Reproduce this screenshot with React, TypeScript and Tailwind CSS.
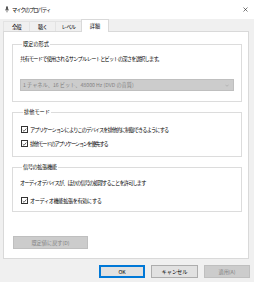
const font = { fontFamily: '"Noto Sans CJK JP", "Noto Sans", sans-serif' };

function Check() {
  return (
    <span className="w-[7px] h-[7px] border border-[#333] bg-white flex items-center justify-center shrink-0">
      <svg viewBox="0 0 10 10" className="w-[6px] h-[6px]">
        <path d="M1.5 5.2 L4 7.6 L8.6 2.2" fill="none" stroke="#222" strokeWidth="1.4" />
      </svg>
    </span>
  );
}

const tabs = ["全般", "聴く", "レベル", "詳細"];

export default function App() {
  return (
    <div
      className="w-[254px] h-[282px] bg-[#f0f0f0] text-black text-[5.2px] leading-[6px] flex flex-col overflow-hidden"
      style={font}
    >
      {/* ===== TITLE BAR ===== */}
      <div className="h-[19px] bg-white flex items-center pl-[5px] pr-[6px] shrink-0">
        <svg viewBox="0 0 6 10" className="w-[4px] h-[7px] mr-[3px]">
          <rect x="1.5" y="0" width="3" height="6" rx="1.5" fill="#555" />
          <path d="M0.6 4 Q0.6 7.5 3 7.5 Q5.4 7.5 5.4 4" fill="none" stroke="#555" strokeWidth="0.8" />
          <rect x="2.6" y="7.5" width="0.8" height="2" fill="#555" />
        </svg>
        <span className="tracking-[-0.9px]">マイクのプロパティ</span>
        <svg viewBox="0 0 10 10" className="w-[5px] h-[5px] ml-auto">
          <path d="M1 1 L9 9 M9 1 L1 9" stroke="#222" strokeWidth="1.2" />
        </svg>
      </div>

      {/* ===== TABS ===== */}
      <div className="h-[12px] flex items-end pl-[3px] shrink-0">
        {tabs.map((t, i) =>
          i === 3 ? (
            <div
              key={t}
              className="h-[13px] w-[28px] -mb-px bg-white border border-b-0 border-[#d9d9d9] flex items-center justify-center relative z-10"
            >
              {t}
            </div>
          ) : (
            <div
              key={t}
              className="h-[10px] w-[26px] border border-r-0 border-b-0 border-[#e3e3e3] flex items-center justify-center tracking-[-0.6px]"
            >
              {t}
            </div>
          )
        )}
      </div>

      {/* ===== PANEL ===== */}
      <div className="ml-[3px] mr-[5px] h-[228px] bg-white border border-[#d9d9d9] pl-[8px] pr-[6px] pt-[9px] flex flex-col shrink-0">
        <fieldset className="border border-[#dcdcdc] px-[7px] pt-[9px] pb-[10px]">
          <legend className="ml-[2px] px-[1px] leading-[6px]">既定の形式</legend>
          <div className="tracking-[-0.75px]">共有モードで使用されるサンプル レートとビットの深さを選択します。</div>
          <div className="mt-[17px] h-[12px] bg-[#cccccc] border border-[#bfbfbf] flex items-center pl-[2px] pr-[4px] text-[#838383]">
            <span>1 チャネル、16 ビット、48000 Hz (DVD の音質)</span>
            <svg viewBox="0 0 10 6" className="w-[4px] h-[3px] ml-auto">
              <path d="M1 1 L5 5 L9 1" fill="none" stroke="#9a9a9a" strokeWidth="1.2" />
            </svg>
          </div>
        </fieldset>

        <fieldset className="mt-[7px] border border-[#dcdcdc] px-[8px] pt-[11px] pb-[9px]">
          <legend className="ml-[2px] px-[1px] leading-[6px]">排他モード</legend>
          <div className="flex items-center gap-[2px] h-[7px]">
            <Check />
            <span className="tracking-[-0.85px]">アプリケーションによりこのデバイスを排他的に制御できるようにする</span>
          </div>
          <div className="flex items-center gap-[2px] h-[7px] mt-[7px]">
            <Check />
            <span className="tracking-[-1.1px]">排他モードのアプリケーションを優先する</span>
          </div>
        </fieldset>

        <fieldset className="mt-[7px] border border-[#dcdcdc] px-[7px] pt-[10px] pb-[7px]">
          <legend className="ml-[2px] px-[1px] leading-[6px] tracking-[-0.4px]">信号の拡張機能</legend>
          <div className="tracking-[-0.85px]">オーディオ デバイスが、ほかの信号の処理することを許可します</div>
          <div className="flex items-center gap-[2px] h-[7px] mt-[11px] ml-[1px]">
            <Check />
            <span className="tracking-[-0.4px]">オーディオ機能拡張を有効にする</span>
          </div>
        </fieldset>

        <div className="mt-auto mb-[9px] ml-[1px] w-[75px] h-[13px] bg-[#cccccc] border border-[#bfbfbf] text-[#838383] flex items-center justify-center">
          既定値に戻す(D)
        </div>
      </div>

      {/* ===== BUTTONS ===== */}
      <div className="mt-[6px] flex justify-end gap-[6px] pr-[4px]">
        <div className="w-[46px] h-[13px] bg-[#e1e1e1] border border-[#0078d7] outline outline-[#0078d7] -outline-offset-2 flex items-center justify-center">
          OK
        </div>
        <div className="w-[47px] h-[13px] bg-[#e1e1e1] border border-[#adadad] flex items-center justify-center">
          キャンセル
        </div>
        <div className="w-[46px] h-[13px] bg-[#cccccc] border border-[#bfbfbf] text-[#838383] flex items-center justify-center">
          適用(A)
        </div>
      </div>
    </div>
  );
}
